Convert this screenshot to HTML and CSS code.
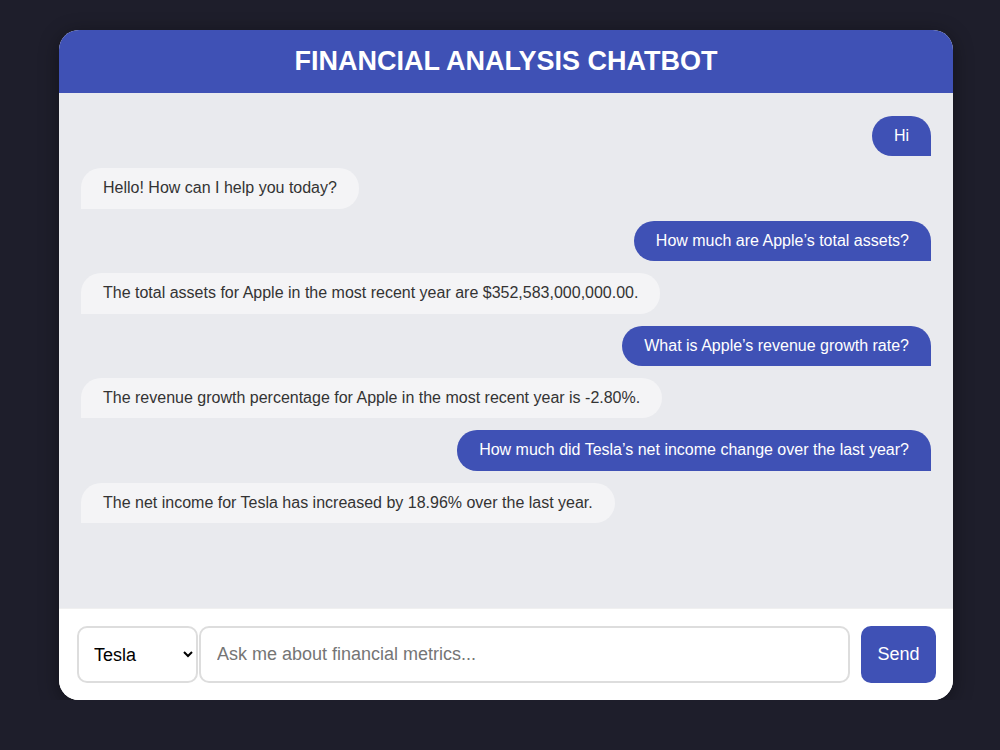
FILE: index.html
```html
<!DOCTYPE html>
<html>
<head>
    <title>Financial Analysis Chatbot</title>
    <meta charset="utf-8">
    <meta name="viewport" content="width=device-width, initial-scale=1">
    <link rel="stylesheet" href="styles.css">
</head>

<body>
    <div class="chat-container">
        <div class="chat-header">
            <h1>Financial Analysis Chatbot</h1>
        </div>
        <div class="chat-messages" id="chat-messages">
            <div class="message user-message">Hi</div>
            <div class="message bot-message">Hello! How can I help you today?</div>
            <div class="message user-message">How much are Apple’s total assets?</div>
            <div class="message bot-message">The total assets for Apple in the most recent year are $352,583,000,000.00.</div>
            <div class="message user-message">What is Apple’s revenue growth rate?</div>
            <div class="message bot-message">The revenue growth percentage for Apple in the most recent year is -2.80%.</div>
            <div class="message user-message">How much did Tesla’s net income change over the last year?</div>
            <div class="message bot-message">The net income for Tesla has increased by 18.96% over the last year.</div>
        </div>
        <form class="chat-input" id="chat-form">
            <select id="company" name="company">
                <option>Apple</option>
                <option>Microsoft</option>
                <option selected>Tesla</option>
            </select>
            <input type="text" id="user-input" placeholder="Ask me about financial metrics...">
            <button type="submit">Send</button>
        </form>
    </div>
</body>
</html>
```

FILE: styles.css
```css
body {
    margin: 0;
    padding-left: 12px;
    font-family: Arial, "Liberation Sans", Helvetica, sans-serif;
    background-color: #1e1e2b;
}

.chat-container {
    width: 894px;
    height: 670px;
    margin: 30px auto 0;
    background-color: #ffffff;
    border-radius: 20px;
    overflow: hidden;
    display: flex;
    flex-direction: column;
    box-shadow: 0px 4px 20px rgba(0,0,0,.4);
}

.chat-header {
    background-color: #3f51b5;
    height: 63px;
    display: flex;
    align-items: center;
    justify-content: center;
}

.chat-header h1 {
    margin: 0;
    color: #ffffff;
    font-size: 27px;
    font-weight: bold;
    text-transform: uppercase;
}

.chat-messages {
    flex: 1;
    background-color: #e9eaee;
    padding: 23px 22px;
    display: flex;
    flex-direction: column;
    gap: 12px;
    overflow-y: auto;
}

.message {
    max-width: 80%;
    padding: 11px 22px;
    font-size: 16px;
    line-height: 18.4px;
    border-radius: 20px;
}

.user-message {
    align-self: flex-end;
    background-color: #3f51b5;
    color: #ffffff;
    border-bottom-right-radius: 0;
}

.bot-message {
    align-self: flex-start;
    background-color: #f4f4f6;
    color: #333333;
    border-bottom-left-radius: 0;
}

.chat-input {
    display: flex;
    align-items: stretch;
    padding: 17px 17px 17px 18px;
    background-color: #ffffff;
    border-top: 1px solid #f0f0f0;
}

.chat-input select {
    width: 121px;
    height: 57px;
    padding: 0 8px 0 11px;
    font-size: 18px;
    font-family: inherit;
    color: #000000;
    background-color: #ffffff;
    border: 2px solid #dddddd;
    border-radius: 10px;
    margin-right: 1px;
}

.chat-input input[type=text] {
    flex: 1;
    height: 57px;
    padding: 0 16px;
    font-size: 18px;
    font-family: inherit;
    border: 2px solid #dddddd;
    border-radius: 10px;
    box-sizing: border-box;
}

.chat-input input::placeholder {
    color: #757575;
}

.chat-input button {
    margin-left: 11px;
    width: 75px;
    height: 57px;
    background-color: #3f51b5;
    color: #ffffff;
    font-size: 18px;
    font-family: inherit;
    border: none;
    border-radius: 10px;
    cursor: pointer;
}

.chat-input button:hover {
    opacity: 0.9;
}
```
